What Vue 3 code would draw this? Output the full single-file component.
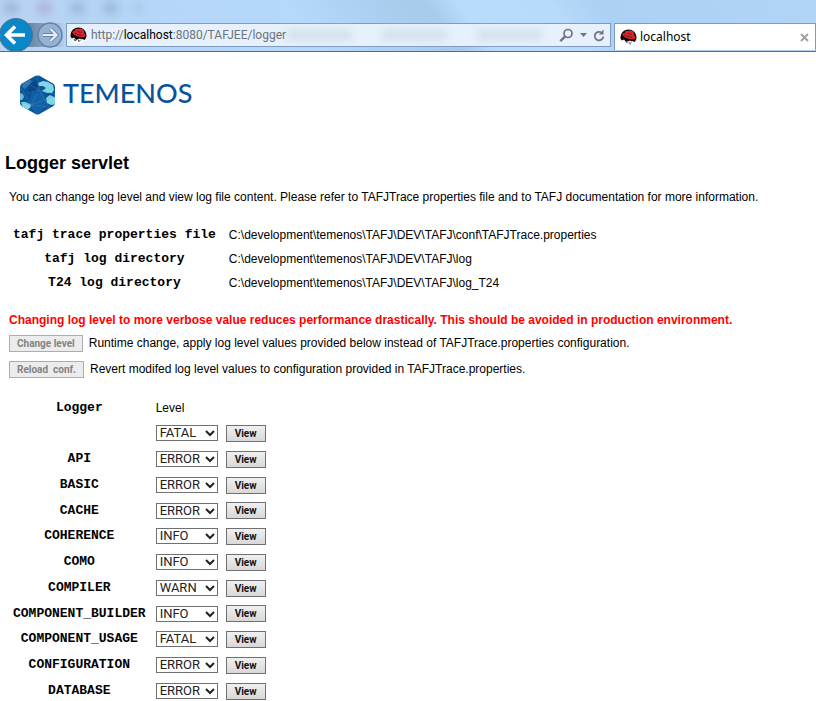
<script setup>
import { ref } from 'vue'

const paths = [
  { name: 'tafj trace properties file', value: 'C:\\development\\temenos\\TAFJ\\DEV\\TAFJ\\conf\\TAFJTrace.properties' },
  { name: 'tafj log directory', value: 'C:\\development\\temenos\\TAFJ\\DEV\\TAFJ\\log' },
  { name: 'T24 log directory', value: 'C:\\development\\temenos\\TAFJ\\DEV\\TAFJ\\log_T24' }
]

const levels = ['FATAL', 'ERROR', 'WARN', 'INFO', 'DEBUG']

const loggers = ref([
  { name: '', level: 'FATAL' },
  { name: 'API', level: 'ERROR' },
  { name: 'BASIC', level: 'ERROR' },
  { name: 'CACHE', level: 'ERROR' },
  { name: 'COHERENCE', level: 'INFO' },
  { name: 'COMO', level: 'INFO' },
  { name: 'COMPILER', level: 'WARN' },
  { name: 'COMPONENT_BUILDER', level: 'INFO' },
  { name: 'COMPONENT_USAGE', level: 'FATAL' },
  { name: 'CONFIGURATION', level: 'ERROR' },
  { name: 'DATABASE', level: 'ERROR' }
])
</script>

<template>
  <div class="window">
    <header class="chrome">
      <div class="haze" aria-hidden="true"><i></i><i class="pink"></i><i></i><i></i><i class="dot"></i></div>
      <div class="bar">
        <button class="back" type="button" aria-label="Back">
          <svg width="34" height="34" viewBox="0 0 34 34">
            <circle cx="16" cy="17" r="16.500" fill="#0b86c6" stroke="#4d7396" />
            <path d="M25 17H7M15 8.500L6.500 17L15 25.500" fill="none" stroke="#fff" stroke-width="3.600" />
          </svg>
        </button>
        <button class="forward" type="button" aria-label="Forward">
          <svg width="26" height="26" viewBox="0 0 26 26">
            <circle cx="13" cy="13" r="12" fill="#94b2d4" stroke="#6581a3" stroke-width="1.500" />
            <path d="M6 13H19M13.500 7L19.500 13L13.500 19" fill="none" stroke="#6983a3" stroke-width="4" />
            <path d="M6 13H19M13.500 7L19.500 13L13.500 19" fill="none" stroke="#e4edf7" stroke-width="2.200" />
          </svg>
        </button>
        <div class="address">
          <svg class="hat" width="17" height="17" viewBox="0 0 17 17">
            <circle cx="8.500" cy="8.500" r="8" fill="#fff" />
            <path d="M.4 8.500A8.100 8.100 0 0 1 16.600 8.500Q16.500 11.500 14.500 13Q12 11.500 9 11.700L6 13L4 10.500L2 11.500Q.4 10.500 .4 8.500Z" fill="#090909" />
            <path d="M4.500 4Q5.500 1 8 2.100Q10 .8 12.500 2Q14.300 3.300 14.200 6.500Q16 7.500 15.500 9.300Q13.500 11 9.500 10Q4 8.500 2.200 5.700Q2 4.200 4.500 4Z" fill="#dc242c" />
            <path d="M4.500 5.500Q7 8.300 12.500 8.400M7.500 4Q9.500 5.700 12 5.200" fill="none" stroke="#60121a" stroke-width=".8" />
            <path d="M4 12L5 14L6.500 13M8 12.500L9 14.500L11 12.500" fill="none" stroke="#444" stroke-width="1" />
          </svg>
          <div class="url">http://<b>localhost</b>:8080/TAFJEE/logger</div>
          <div class="ghosts" aria-hidden="true"><i></i><i></i><i></i></div>
          <button class="tool" type="button" aria-label="Search">
            <svg width="15" height="15" viewBox="0 0 15 15">
              <circle cx="9" cy="5.500" r="4" fill="none" stroke="#70757b" stroke-width="1.700" />
              <path d="M6.200 8.300L1.300 13.200" stroke="#70757b" stroke-width="2.400" />
            </svg>
          </button>
          <button class="tool" type="button" aria-label="Show address list">
            <svg width="7" height="4" viewBox="0 0 7 4"><path d="M0 0H7L3.500 4Z" fill="#70757b" /></svg>
          </button>
          <button class="tool" type="button" aria-label="Refresh">
            <svg width="12" height="13" viewBox="0 0 12 13">
              <path d="M8 3.300A4.300 4.300 0 1 0 10.300 7.500" fill="none" stroke="#70757b" stroke-width="1.800" />
              <path d="M5.800 5.600H10.500V.4Z" fill="#70757b" />
            </svg>
          </button>
        </div>
        <div class="tab">
          <svg class="hat" width="17" height="17" viewBox="0 0 17 17">
            <path d="M.4 8.500A8.100 8.100 0 0 1 16.600 8.500Q16.500 11.500 14.500 13Q12 11.500 9 11.700L6 13L4 10.500L2 11.500Q.4 10.500 .4 8.500Z" fill="#090909" />
            <path d="M4.500 4Q5.500 1 8 2.100Q10 .8 12.500 2Q14.300 3.300 14.200 6.500Q16 7.500 15.500 9.300Q13.500 11 9.500 10Q4 8.500 2.200 5.700Q2 4.200 4.500 4Z" fill="#dc242c" />
            <path d="M4.500 5.500Q7 8.300 12.500 8.400M7.500 4Q9.500 5.700 12 5.200" fill="none" stroke="#60121a" stroke-width=".8" />
            <path d="M5 12L7 14L8.500 13.500M9 12.500L10 15.500L11.500 12.500" fill="none" stroke="#888" stroke-width="1" />
          </svg>
          <span class="tab-title">localhost</span>
          <button class="tool" type="button" aria-label="Close tab">
            <svg width="9" height="9" viewBox="0 0 9 9"><path d="M1 1L8 8M8 1L1 8" stroke="#a0a0a0" stroke-width="1.900" /></svg>
          </button>
        </div>
      </div>
    </header>

    <main class="page">
      <div class="logo">
        <svg width="37" height="40" viewBox="0 0 37 40">
          <defs>
            <clipPath id="hex"><path d="M16.500 .8Q18.500 0 20.500 .8L34 8.500Q36 10 36 12V28Q36 30 34 31.300L20.500 39Q18.500 40 16.500 39L3 31.300Q1 30 1 28V12Q1 10 3 8.500Z" /></clipPath>
          </defs>
          <g clip-path="url(#hex)">
            <rect width="37" height="40" fill="#0b559b" />
            <path d="M8 11L18 5L19 15L10 18Z" fill="#0a4787" />
            <path d="M13 18L24 17L28 31L19 39L10 29Z" fill="#1261a6" />
            <path d="M4 8L10 4L13 6L9 11L6 14L3 12Z" fill="#2e78b4" />
            <path d="M0 18L4 19L5 22L3 25H0Z" fill="#6bb9d6" />
            <path d="M19 8L24 6L29 7L34 10L35 15L33 18L28 18L23 16L27 13L24 11L20 11Z" fill="#83d5e3" />
            <path d="M27 23L31 20L37 23V29L32 30L28 28Z" fill="#83d5e3" />
            <path d="M2 27L6 27L9 28L12 30L11 33L8 35L4 33Z" fill="#83d5e3" />
            <path d="M6 7L20 15L36 19M20 15L12 30L30 32M20 15L30 32M1 12L12 30L1 27M18 1L20 15M18 39L12 30L36 21M8 18L20 15" fill="none" stroke="#559bc8" stroke-width=".5" opacity=".6" />
          </g>
        </svg>
        <span>TEMENOS</span>
      </div>

      <h1>Logger servlet</h1>
      <p class="intro">You can change log level and view log file content. Please refer to TAFJTrace properties file and to TAFJ documentation for more information.</p>

      <table class="paths">
        <tbody>
          <tr v-for="p in paths" :key="p.name">
            <th scope="row">{{ p.name }}</th>
            <td>{{ p.value }}</td>
          </tr>
        </tbody>
      </table>

      <p class="warning">Changing log level to more verbose value reduces performance drastically. This should be avoided in production environment.</p>
      <div class="action">
        <button class="push" type="button" disabled>Change level</button>
        <span>Runtime change, apply log level values provided below instead of TAFJTrace.properties configuration.</span>
      </div>
      <div class="action">
        <button class="push" type="button" disabled>Reload&nbsp; conf.</button>
        <span>Revert modifed log level values to configuration provided in TAFJTrace.properties.</span>
      </div>

      <table class="loggers">
        <thead>
          <tr><th scope="col">Logger</th><td>Level</td><td></td></tr>
        </thead>
        <tbody>
          <tr v-for="(l, i) in loggers" :key="i">
            <th scope="row"><label :for="'level-' + i">{{ l.name }}</label></th>
            <td>
              <div class="pick">
                <select :id="'level-' + i" v-model="l.level" :aria-label="l.name || 'root'">
                  <option v-for="v in levels" :key="v">{{ v }}</option>
                </select>
                <svg width="10" height="7" viewBox="0 0 10 7"><path d="M1 1L5 5L9 1" fill="none" stroke="#222" stroke-width="2" /></svg>
              </div>
            </td>
            <td><button class="push view" type="button">View</button></td>
          </tr>
        </tbody>
      </table>
    </main>
  </div>
</template>

<style>
body {
  margin: 0;
  background: #fff;
  overflow: hidden;
}
</style>

<style scoped>
.window {
  font: 12px/16px "Liberation Sans", Arial, sans-serif;
  color: #000;
}
button {
  font-family: inherit;
}
.chrome {
  position: relative;
  box-sizing: border-box;
  padding-top: 18px;
  border-bottom: 1px solid #5c6b7e;
  background: linear-gradient(50deg, #b9d4f0 0%, #b5d6f8 20%, #b5d8fb 38%, #a9cdee 50%, #a9cbeb 54%, #badcfc 58%, #b9dbfb 68%, #acd1f5 74%, #b1d4f7 100%);
}
.haze {
  position: absolute;
  top: 2px;
  left: 4px;
  display: flex;
  gap: 18px;
  filter: blur(4px);
}
.haze i {
  width: 15px;
  height: 12px;
  background: #8ba9c9;
  opacity: .6;
}
.haze .pink {
  background: #a99cc8;
}
.haze .dot {
  width: 6px;
  height: 6px;
  margin-top: 3px;
}
.bar {
  display: flex;
  align-items: flex-start;
  height: 33px;
  overflow: hidden;
}
.back,
.forward,
.tool {
  display: flex;
  padding: 0;
  border: 0;
  background: none;
}
.back {
  z-index: 1;
  margin-right: -8px;
}
.forward {
  padding: 4px 3px 2px 11px;
  background: linear-gradient(90deg, #64809f, #8fadce 60%, transparent) 0 5px / 100% 24px no-repeat;
}
.address {
  position: relative;
  display: flex;
  flex: 1;
  align-items: center;
  box-sizing: border-box;
  height: 24px;
  margin: 5px 3px 0 0;
  padding: 0 5px 0 3px;
  border: 1px solid #7e9cbf;
  background: #e6f1fd;
}
.url {
  z-index: 1;
  flex: 1;
  margin-left: 4px;
  color: #6d737a;
  font: 12px/18px Roboto, "Open Sans", sans-serif;
}
.url b {
  color: #000;
  font-weight: 400;
}
.ghosts {
  position: absolute;
  top: 6px;
  left: 220px;
  display: flex;
  gap: 30px;
  filter: blur(4px);
}
.ghosts i {
  width: 65px;
  height: 10px;
  background: #d3deea;
}
.tool + .tool {
  margin-left: 6px;
}
.tab {
  display: flex;
  flex: 0 0 202px;
  align-items: center;
  box-sizing: border-box;
  height: 27px;
  margin-top: 5px;
  padding: 0 6px 0 5px;
  border: solid #7e9cbf;
  border-width: 1px 1px 0;
  background: #fff;
}
.tab-title {
  flex: 1;
  margin-left: 3px;
  font: 12px/18px "Noto Sans", "Open Sans", sans-serif;
}
.page {
  padding: 23px 9px 0;
}
.logo {
  display: flex;
  align-items: center;
  margin-left: 10px;
  gap: 7px;
  color: #08549b;
  font: 500 27px/36px Lato, sans-serif;
}
.logo span {
  padding-bottom: 4px;
}
h1 {
  margin: 37px 0 15px -4px;
  font-size: 18px;
  line-height: 22px;
}
p {
  margin: 0;
}
th {
  padding: 0 4px;
  font: bold 13px/16px "Liberation Mono", "Courier New", monospace;
}
td {
  padding: 0;
}
table {
  border-spacing: 0;
}
.paths {
  margin: 18px 0 17px;
}
.paths tr {
  height: 24px;
}
.paths td {
  padding-left: 9px;
}
.warning {
  color: #f00;
  font-weight: 700;
}
.action {
  display: flex;
  align-items: center;
  height: 26px;
  gap: 6px;
}
.warning + .action {
  margin-top: 2px;
}
.push {
  box-sizing: border-box;
  height: 17px;
  padding: 0 7px;
  border: 1px solid #707070;
  background: linear-gradient(#f0f0f0, #d8d8d8);
  color: #111;
  font-family: Roboto, sans-serif;
  font-size: 10px;
  font-weight: 700;
  line-height: 15px;
}
.push:disabled {
  border-color: #adadad;
  background: #ececec;
  color: #838383;
}
.view {
  display: block;
  width: 40px;
  padding: 0;
}
.loggers {
  margin-top: 14px;
}
.loggers tr {
  height: 26px;
}
.loggers thead tr {
  height: 24px;
}
.loggers tbody tr:nth-child(4n) {
  height: 25px;
}
.loggers td {
  padding-left: 6px;
}
.loggers td + td {
  padding-left: 8px;
}
.pick {
  position: relative;
  display: flex;
}
.pick svg {
  position: absolute;
  top: 5px;
  right: 3px;
  pointer-events: none;
}
select {
  box-sizing: border-box;
  width: 62px;
  height: 16px;
  padding: 0 0 0 3px;
  border: 1px solid #707070;
  border-radius: 0;
  appearance: none;
  background: #fff;
  color: #222;
  font: 13px/14px Roboto, sans-serif;
}
</style>
